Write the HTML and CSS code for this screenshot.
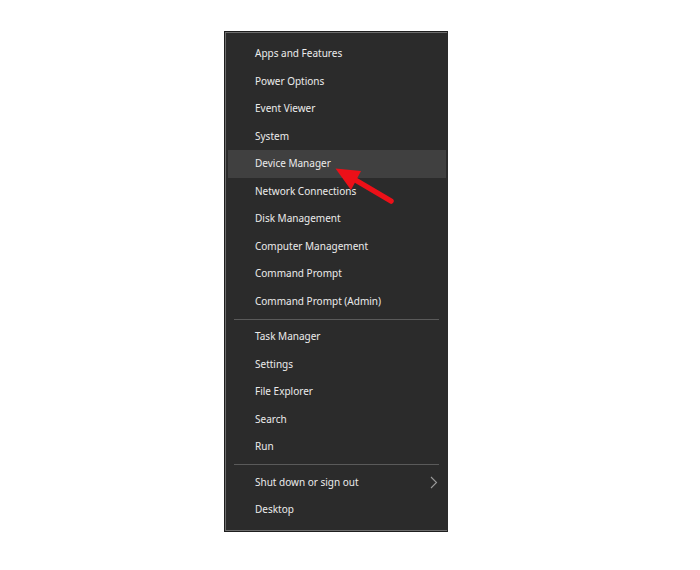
FILE: index.html
```html
<!DOCTYPE html>
<html lang="en">
<head>
<meta charset="utf-8">
<title>Quick Link Menu</title>
<link rel="stylesheet" href="styles.css">
</head>
<body>
<div class="stage">
  <nav class="menu">
    <ul class="group">
      <li class="item">Apps and Features</li>
      <li class="item">Power Options</li>
      <li class="item">Event Viewer</li>
      <li class="item">System</li>
      <li class="item hover">Device Manager</li>
      <li class="item">Network Connections</li>
      <li class="item">Disk Management</li>
      <li class="item">Computer Management</li>
      <li class="item">Command Prompt</li>
      <li class="item">Command Prompt (Admin)</li>
    </ul>
    <div class="sep"></div>
    <ul class="group">
      <li class="item">Task Manager</li>
      <li class="item">Settings</li>
      <li class="item">File Explorer</li>
      <li class="item">Search</li>
      <li class="item">Run</li>
    </ul>
    <div class="sep"></div>
    <ul class="group">
      <li class="item has-sub">Shut down or sign out
        <svg class="chev" width="8" height="13" viewBox="0 0 8 13"><path d="M1 1 L6.5 6.5 L1 12" fill="none" stroke="#9a9a9a" stroke-width="1.1"/></svg>
      </li>
      <li class="item">Desktop</li>
    </ul>
  </nav>
  <svg class="arrow" width="70" height="50" viewBox="0 0 70 50">
    <line x1="61" y1="41" x2="22" y2="18" stroke="#ec1018" stroke-width="5.5" stroke-linecap="round"/>
    <polygon points="5.5,8.5 31,11 21,30" fill="#ec1018"/>
  </svg>
</div>
</body>
</html>
```
FILE: styles.css
```css
html, body {
  margin: 0;
  padding: 0;
  background: #ffffff;
}
.stage {
  position: relative;
  width: 700px;
  height: 570px;
}
.menu {
  position: relative;
  top: 31px;
  left: 224px;
  box-sizing: border-box;
  width: 224px;
  height: 501px;
  background: #2b2b2b;
  border: 1px solid #1e1e1e;
  border-right: 1px solid #2b2b2b;
  box-shadow: inset 1px 1px 0 #6e6e6e, inset 0 -1px 0 #6e6e6e;
  padding: 8px 1px 0 3px;
  font-family: "Noto Sans", "Open Sans", sans-serif;
  font-size: 10px;
  color: #ececec;
}
.group {
  list-style: none;
  margin: 0;
  padding: 0;
}
.item {
  position: relative;
  height: 27.5px;
  line-height: 27.5px;
  padding-left: 27px;
  white-space: nowrap;
}
.item.hover {
  background: #404040;
}
.sep {
  height: 8px;
  display: flex;
  align-items: center;
  padding: 0 7px 0 6px;
}
.sep::before {
  content: "";
  flex: 1;
  height: 1px;
  background: #5a5a5a;
}
.chev {
  position: absolute;
  right: 8px;
  top: 7px;
}
.arrow {
  position: absolute;
  left: 330px;
  top: 160px;
}
```
